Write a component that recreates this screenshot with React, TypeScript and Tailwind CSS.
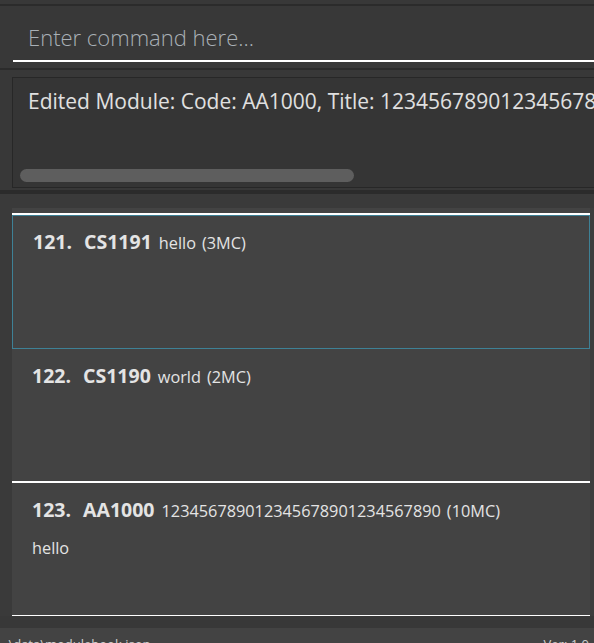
import React from "react";

type Module = {
  index: number;
  code: string;
  title: string;
  credits: number;
  description?: string;
  selected?: boolean;
};

const modules: Module[] = [
  { index: 121, code: "CS1191", title: "hello", credits: 3, selected: true },
  { index: 122, code: "CS1190", title: "world", credits: 2 },
  {
    index: 123,
    code: "AA1000",
    title: "123456789012345678901234567890",
    credits: 10,
    description: "hello",
  },
];

const ModuleCard = ({ m }: { m: Module }) => (
  <div
    className={
      m.selected
        ? "h-[134px] border border-[#3e8196] px-5 pt-[11px]"
        : "h-[134px] border-b-2 border-white px-5 pt-[12px]"
    }
  >
    <div className="flex items-baseline whitespace-nowrap text-[#e4e4e4]">
      <span className="text-[19.5px] font-bold">{m.index}.</span>
      <span className="ml-[12px] text-[19.5px] font-bold">{m.code}</span>
      <span className="ml-[7px] text-[16.3px]">{m.title}</span>
      <span className="ml-[6px] text-[16.3px]">({m.credits}MC)</span>
    </div>
    {m.description && (
      <div className="mt-[12px] text-[16.3px] text-[#e4e4e4]">{m.description}</div>
    )}
  </div>
);

export default function App() {
  return (
    <div
      className="flex h-[643px] w-[594px] flex-col overflow-hidden bg-[#383838]"
      style={{ fontFamily: '"Open Sans", "Noto Sans", sans-serif' }}
    >
      <div className="h-[4px] shrink-0" />
      <div className="h-[2px] shrink-0 bg-[#2b2b2b]" />

      {/* command box */}
      <div className="h-[62px] shrink-0 pl-[13px] pt-[13px]">
        <div className="h-[43px] border-b-2 border-white pl-[15px]">
          <span className="text-[22px] font-light leading-[36px] text-[#a9b0b6]">
            Enter command here...
          </span>
        </div>
      </div>
      <div className="h-[2px] shrink-0 bg-[#2b2b2b]" />

      {/* result display */}
      <div className="h-[120px] shrink-0 pl-[12px] pt-[7px]">
        <div className="flex h-[111px] flex-col border border-r-0 border-[#272727] bg-[#353535]">
          <div className="flex-1 whitespace-nowrap pl-[15px] pt-[8px] text-[21px] text-[#e0e0e0]">
            Edited Module: Code: AA1000, Title: 123456789012345678901234567890
          </div>
          <div className="mb-[5px] ml-[7px] h-[13px] w-[334px] rounded-full bg-[#5e5e5e]" />
        </div>
      </div>
      <div className="h-[4px] shrink-0 bg-[#2b2b2b]" />

      {/* module list */}
      <div className="flex h-[434px] shrink-0 flex-col bg-[#3a3a3a] pl-[12px] pt-[14px]">
        <div className="flex h-[408px] overflow-hidden bg-[#434343]">
          <div className="w-[578px]">
            <div className="h-[7px] border-b-2 border-white" />
            {modules.map((m) => (
              <ModuleCard key={m.index} m={m} />
            ))}
          </div>
          <div className="flex-1 bg-[#3d3d3d]" />
        </div>
        <div className="-ml-[12px] flex-1 bg-[#383838]" />
      </div>

      {/* status bar */}
      <div className="flex flex-1 items-start justify-between whitespace-nowrap bg-[#434343] px-[5px] pt-[7px] text-[13px] text-[#d0d0d0]">
        <span>.\data\modulebook.json</span>
        <span>Ver: 1.0</span>
      </div>
    </div>
  );
}
